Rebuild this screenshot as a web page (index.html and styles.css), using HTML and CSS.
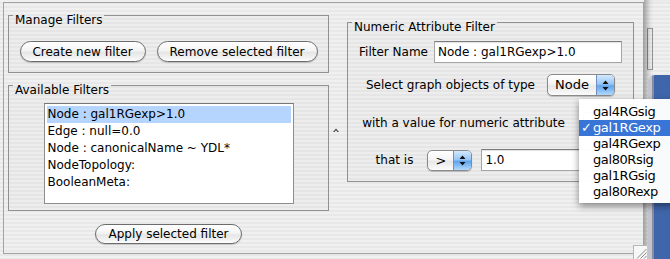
FILE: index.html
```html
<!DOCTYPE html>
<html>
<head>
<meta charset="utf-8">
<link rel="stylesheet" href="styles.css">
</head>
<body>
<div class="screen">
  <div class="window">
    <div class="left">
      <fieldset class="group manage">
        <legend>Manage Filters</legend>
        <div class="btnrow">
          <button class="aqua create">Create new filter</button>
          <button class="aqua remove">Remove selected filter</button>
        </div>
      </fieldset>
      <fieldset class="group avail">
        <legend>Available Filters</legend>
        <ul class="list">
          <li class="sel">Node : gal1RGexp&gt;1.0</li>
          <li>Edge : null=0.0</li>
          <li>Node : canonicalName ~ YDL*</li>
          <li>NodeTopology:</li>
          <li>BooleanMeta:</li>
        </ul>
      </fieldset>
      <button class="aqua apply">Apply selected filter</button>
    </div>
    <div class="splitter">
      <svg width="6" height="4" viewBox="0 0 6 4"><path d="M0 4 L3 0.5 L6 4 L4.6 4 L3 2.2 L1.4 4Z" fill="#444"/></svg>
    </div>
    <div class="right">
      <fieldset class="group numeric">
        <legend>Numeric Attribute Filter</legend>
        <div class="rows">
          <div class="row r1">
            <label class="lbl">Filter Name</label>
            <div class="field name">Node : gal1RGexp&gt;1.0</div>
          </div>
          <div class="row r2">
            <span class="lbl">Select graph objects of type</span>
            <div class="popup node">
              <span class="pv">Node</span>
              <span class="arrows"><svg width="7" height="11" viewBox="0 0 7 11"><path d="M3.5 0.5 L6.5 4 H0.5Z M0.5 7 H6.5 L3.5 10.5Z" fill="#111"/></svg></span>
            </div>
          </div>
          <div class="row r3">
            <span class="lbl">with a value for numeric attribute</span>
            <div class="popup attr">
              <span class="pv"></span>
              <span class="arrows"><svg width="7" height="11" viewBox="0 0 7 11"><path d="M3.5 0.5 L6.5 4 H0.5Z M0.5 7 H6.5 L3.5 10.5Z" fill="#111"/></svg></span>
            </div>
          </div>
          <div class="row r4">
            <span class="lbl">that is</span>
            <div class="popup op">
              <span class="pv">&gt;</span>
              <span class="arrows"><svg width="7" height="11" viewBox="0 0 7 11"><path d="M3.5 0.5 L6.5 4 H0.5Z M0.5 7 H6.5 L3.5 10.5Z" fill="#111"/></svg></span>
            </div>
            <div class="field val">1.0</div>
          </div>
        </div>
      </fieldset>
    </div>
  </div>
  <div class="desk">
    <div class="otherbox"></div>
    <div class="blue"></div>
  </div>
</div>
<div class="grip">
  <svg width="13" height="13" viewBox="0 0 13 13"><path d="M12.5 3 L3 12.5 M12.5 6.5 L6.5 12.5 M12.5 10 L10 12.5" stroke="#8a8a8a" stroke-width="1"/></svg>
</div>
<div class="menu">
  <div class="mi"><span class="ck"></span>gal4RGsig</div>
  <div class="mi on"><span class="ck">✓</span>gal1RGexp</div>
  <div class="mi"><span class="ck"></span>gal4RGexp</div>
  <div class="mi"><span class="ck"></span>gal80Rsig</div>
  <div class="mi"><span class="ck"></span>gal1RGsig</div>
  <div class="mi"><span class="ck"></span>gal80Rexp</div>
</div>
</body>
</html>
```
FILE: styles.css
```css
html, body {
  margin: 0;
  padding: 0;
}
body {
  width: 670px;
  height: 259px;
  overflow: hidden;
  position: relative;
  font-family: "DejaVu Sans", sans-serif;
  font-size: 12px;
  color: #000;
  background: repeating-linear-gradient(to bottom, #f0f0f0 0 2px, #e8e8e8 2px 4px);
}
.screen {
  display: flex;
  height: 259px;
}
.window {
  margin: 2px 0 0 3px;
  width: 641px;
  height: 252px;
  box-sizing: border-box;
  border: 1px solid #a2a2a2;
  display: flex;
  padding-left: 4px;
}
.left {
  width: 321px;
  display: flex;
  flex-direction: column;
}
.group {
  margin: 0;
  padding: 0;
  border: 1px solid #919191;
  min-width: 0;
  background: rgba(0, 0, 0, 0.012);
}
.group legend {
  padding: 9px 2px 0;
  margin-left: 4px;
  line-height: 14px;
  font-size: 12px;
}
.manage {
  margin-top: 1px;
  padding: 14px 0 10px;
}
.btnrow {
  display: flex;
  justify-content: center;
  gap: 11px;
}
.aqua {
  height: 21px;
  box-sizing: border-box;
  border: 1px solid #6c6c6c;
  border-radius: 11px;
  padding: 0;
  font-family: inherit;
  font-size: 12px;
  color: #000;
  background: linear-gradient(to bottom, #ffffff 0%, #f4f4f4 45%, #e6e6e6 55%, #f3f3f3 85%, #ffffff 100%);
  box-shadow: 0 1px 1px rgba(0, 0, 0, 0.18);
}
.create { width: 126px; }
.remove { width: 161px; }
.avail {
  margin-top: 1px;
  padding: 6px 0 6px;
}
.list {
  margin: 0 auto;
  width: 250px;
  height: 101px;
  box-sizing: border-box;
  border: 1px solid #8e8e8e;
  border-top-color: #777;
  background: #fff;
  padding: 2px;
  list-style: none;
}
.list li {
  height: 17px;
  line-height: 17px;
  padding-left: 1px;
  white-space: nowrap;
}
.list li.sel {
  background: #b5d5ff;
}
.apply {
  margin: 13px auto 0;
  width: 147px;
  height: 20px;
}
.splitter {
  width: 18px;
  box-sizing: border-box;
  padding: 125px 0 0 4px;
}
.splitter svg { display: block; }
.right {
  width: 287px;
}
.numeric {
  margin-top: 8px;
  padding: 0 0 10px;
}
.rows {
  display: flex;
  flex-direction: column;
  align-items: center;
}
.row {
  display: flex;
  align-items: center;
  height: 22px;
  white-space: nowrap;
}
.r1 { margin-top: 7px; }
.r1 .lbl { margin-right: 6px; }
.r2 { margin-top: 11px; }
.r2 .lbl { margin-right: 12px; }
.r3 { margin-top: 16px; }
.r3 .lbl { margin-right: 18px; }
.r4 { margin-top: 15px; }
.r4 .lbl { margin-right: 14px; }
.field {
  height: 22px;
  box-sizing: border-box;
  border: 1px solid #a5a5a5;
  border-top-color: #7c7c7c;
  background: #fff;
  padding-left: 3px;
  line-height: 20px;
  box-shadow: inset 0 1px 1px rgba(0, 0, 0, 0.12);
}
.name { width: 188px; }
.val { width: 124px; margin-left: 9px; }
.popup {
  display: flex;
  height: 22px;
  box-sizing: border-box;
  border: 1px solid #8a8a8a;
  border-radius: 5px;
  overflow: hidden;
  background: linear-gradient(to bottom, #ffffff 0%, #f5f5f5 45%, #e8e8e8 55%, #fbfbfb 100%);
  box-shadow: 0 1px 1px rgba(0, 0, 0, 0.2);
}
.pv {
  flex: 1;
  padding-left: 7px;
  line-height: 20px;
  font-size: 13px;
}
.arrows {
  width: 17px;
  border-left: 1px solid #6f8fc2;
  background: linear-gradient(to bottom, #d3e8fe 0%, #98c7f5 45%, #5fa4ee 55%, #b2d9fc 100%);
  display: flex;
  align-items: center;
  justify-content: center;
}
.arrows svg { display: block; }
.node { width: 68px; }
.op { width: 45px; height: 21px; }
.attr { width: 36px; }
.desk {
  flex: 1;
  display: flex;
  flex-direction: column;
  box-shadow: inset 7px 0 6px -4px rgba(0, 0, 0, 0.35);
}
.otherbox {
  margin: 28px 0 0 3px;
  width: 4px;
  height: 40px;
  border: 1px solid #909090;
  border-left-color: #777;
}
.blue {
  margin: 5px 0 0 4px;
  flex: 1;
  border-top-left-radius: 7px;
  background: linear-gradient(to right, #c4c4ce 0 4px, #8b8ba0 4px 6px, #3f66aa 6px);
}
.grip {
  position: absolute;
  left: 633px;
  top: 245px;
  width: 14px;
  height: 14px;
  box-sizing: border-box;
  border-left: 1px solid #b5b5b5;
  border-top: 1px solid #b5b5b5;
  background: #f7f7f7;
}
.grip svg { display: block; }
.menu {
  position: absolute;
  left: 579px;
  top: 99px;
  width: 100px;
  height: 104px;
  box-sizing: border-box;
  padding-top: 5px;
  background: rgba(255, 255, 255, 0.97);
  box-shadow: 0 3px 7px rgba(0, 0, 0, 0.45);
  font-size: 13px;
  letter-spacing: -0.4px;
}
.mi {
  height: 16px;
  line-height: 16px;
  display: flex;
  padding-left: 2px;
  white-space: nowrap;
}
.mi .ck {
  width: 12px;
  letter-spacing: 0;
}
.mi.on {
  background: #3875d7;
  color: #fff;
}
```
